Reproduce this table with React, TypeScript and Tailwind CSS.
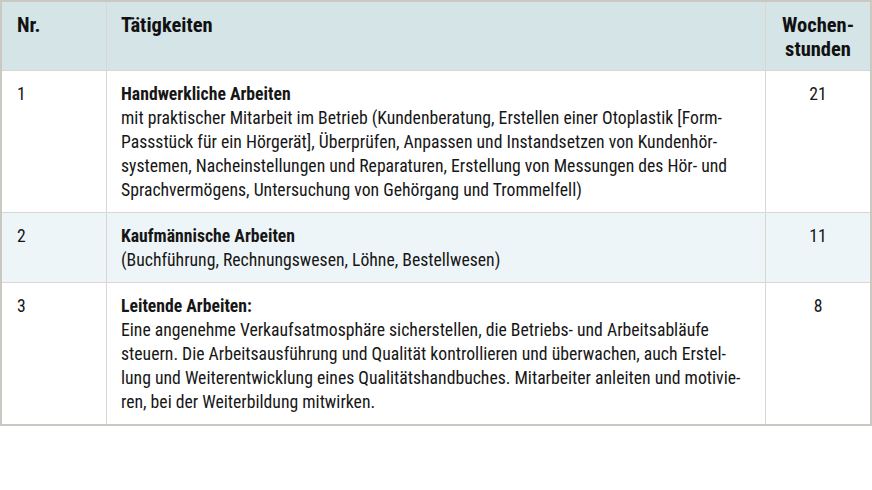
import React from "react";

type RowProps = {
  nr: string;
  title: string;
  lines: string[];
  hours: string;
  bg: string;
};

function Row({ nr, title, lines, hours, bg }: RowProps) {
  return (
    <>
      <div className={`${bg} border-r border-t border-[#d8d8d1] pl-[15px] pt-[11px] pb-[10px]`}>{nr}</div>
      <div className={`${bg} border-r border-t border-[#d8d8d1] pl-[14px] pt-[11px] pb-[10px] whitespace-nowrap`}>
        <div className="font-bold">{title}</div>
        {lines.map((l, i) => (
          <div key={i}>{l}</div>
        ))}
      </div>
      <div className={`${bg} border-t border-[#d8d8d1] pt-[11px] pb-[10px] text-center`}>{hours}</div>
    </>
  );
}

export default function App() {
  return (
    <div className="w-[872px] h-[490px] bg-white">
      <div className="w-[872px] border-2 border-[#c9c9c1] grid grid-cols-[105px_659px_1fr] font-['Roboto_Condensed',_'Roboto',_sans-serif] text-[17.7px] leading-[24px] text-[#161616]">
        <div className="bg-[#d4e4e7] border-r border-[#d8d8d1] pl-[15px] pt-[11px] pb-[9px] font-bold text-[20.5px] text-[#111]">Nr.</div>
        <div className="bg-[#d4e4e7] border-r border-[#d8d8d1] pl-[14px] pt-[11px] pb-[9px] font-bold text-[20.5px] text-[#111]">Tätigkeiten</div>
        <div className="bg-[#d4e4e7] pt-[11px] pb-[9px] font-bold text-center text-[20.5px] text-[#111]">
          <div>Wochen-</div>
          <div>stunden</div>
        </div>
        <Row
          nr="1"
          title="Handwerkliche Arbeiten"
          lines={[
            "mit praktischer Mitarbeit im Betrieb (Kundenberatung, Erstellen einer Otoplastik [Form-",
            "Passstück für ein Hörgerät], Überprüfen, Anpassen und Instandsetzen von Kundenhör-",
            "systemen, Nacheinstellungen und Reparaturen, Erstellung von Messungen des Hör- und",
            "Sprachvermögens, Untersuchung von Gehörgang und Trommelfell)",
          ]}
          hours="21"
          bg="bg-white"
        />
        <Row
          nr="2"
          title="Kaufmännische Arbeiten"
          lines={["(Buchführung, Rechnungswesen, Löhne, Bestellwesen)"]}
          hours="11"
          bg="bg-[#eef5f8]"
        />
        <Row
          nr="3"
          title="Leitende Arbeiten:"
          lines={[
            "Eine angenehme Verkaufsatmosphäre sicherstellen, die Betriebs- und Arbeitsabläufe",
            "steuern. Die Arbeitsausführung und Qualität kontrollieren und überwachen, auch Erstel-",
            "lung und Weiterentwicklung eines Qualitätshandbuches. Mitarbeiter anleiten und motivie-",
            "ren, bei der Weiterbildung mitwirken.",
          ]}
          hours="8"
          bg="bg-white"
        />
      </div>
    </div>
  );
}
